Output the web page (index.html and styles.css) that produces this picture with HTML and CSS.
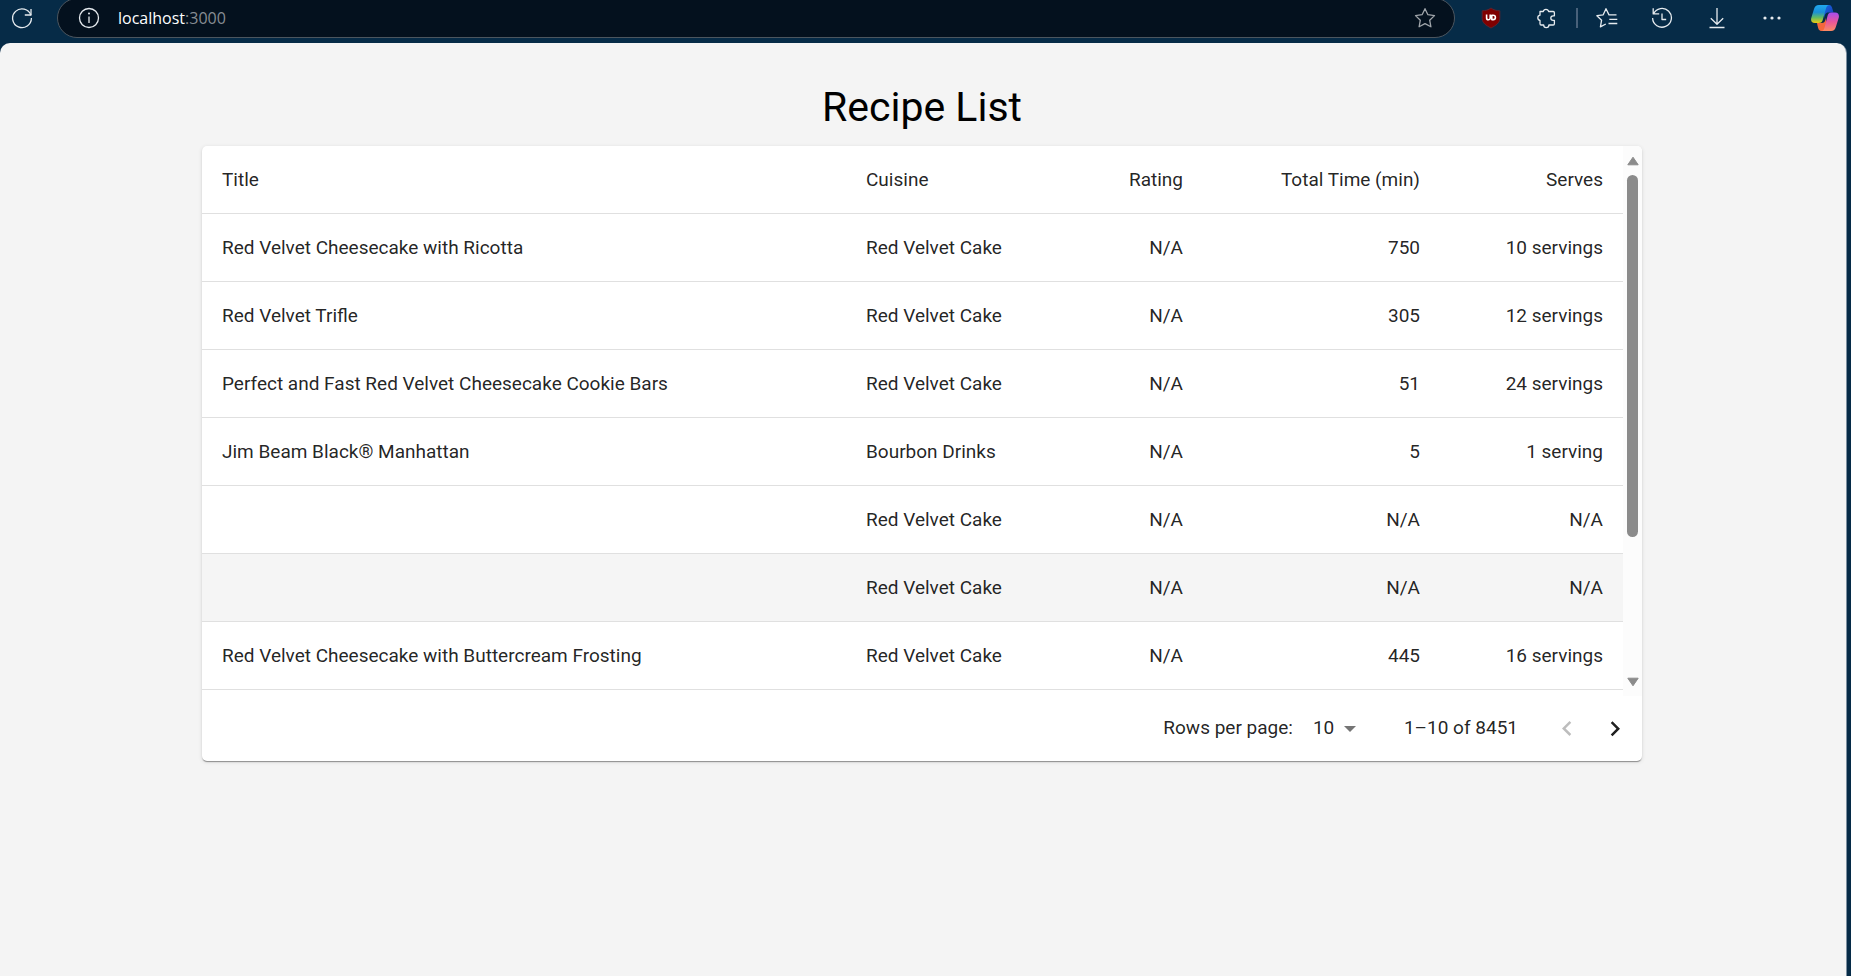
FILE: index.html
```html
<!DOCTYPE html>
<html lang="en">
<head>
<meta charset="utf-8">
<title>Recipe List</title>
<link rel="stylesheet" href="styles.css">
</head>
<body>
<header class="toolbar">
  <button class="tool refresh" aria-label="Refresh"><svg viewBox="0 0 22 22"><path d="M19.9 8.2A9.4 9.4 0 1 0 20.4 11"/><path d="M20 2v6h-6.200"/></svg></button>
  <div class="address">
    <button class="tool" aria-label="Site information"><svg viewBox="0 0 22 22"><circle cx="11" cy="11" r="9.500"/><path d="M11 9.500v6.500"/><circle class="solid" cx="11" cy="6.500" r="1"/></svg></button>
    <div class="url"><span class="host">localhost</span><span>:3000</span></div>
    <button class="tool dim" aria-label="Add to favorites"><svg viewBox="0 0 22 22"><path d="M11 1.700l2.900 6 6.600.9-4.800 4.600 1.200 6.600L11 16.600l-5.900 3.200 1.200-6.600L1.500 8.600l6.600-.9z"/></svg></button>
  </div>
  <div class="actions">
    <button class="tool" aria-label="uBlock Origin"><svg viewBox="0 0 22 22"><path class="shield" d="M11 1c2.500 1.900 5.400 2.700 8.800 2.800v8c0 4-3.800 6.700-8.800 9.200-5-2.500-8.800-5.200-8.800-9.200v-8C5.600 3.700 8.500 2.900 11 1z"/><path class="mark" d="M6.600 7.600v3.400a1.800 1.800 0 0 0 3.600 0V7.600M11.800 8.200v4.400h1.400a2.200 2.200 0 0 0 0-4.400z"/></svg></button>
    <button class="tool" aria-label="Extensions"><svg viewBox="0 0 22 22"><path d="M5 4.500h3.300a2.700 2.700 0 0 1 5.300 0h4.600c.8 0 1.200.4 1.200 1.200v3.100h-1.300a2.300 2.300 0 0 0 0 4.600h1.300v3.400c0 .8-.4 1.200-1.200 1.200h-4.300a2.600 2.600 0 0 1-5.200 0H6.200c-.8 0-1.200-.4-1.200-1.200v-3.300a2.700 2.700 0 0 1 0-5.300z"/></svg></button>
    <span class="divider"></span>
    <button class="tool" aria-label="Favorites"><svg viewBox="0 0 22 22"><path d="M20.500 7.900H13L10 1.700 7.200 7.800l-6.300.9 4.700 4.500-1.200 6.600L9.800 17M13.300 12.300h8M12.500 16.500h8.800"/></svg></button>
    <button class="tool" aria-label="History"><svg viewBox="0 0 22 22"><path d="M2.400 7A9.400 9.400 0 1 1 1.600 11M2.200 1.200v5.700h6M11 6.500v6h4.200"/></svg></button>
    <button class="tool" aria-label="Downloads"><svg viewBox="0 0 22 22"><path d="M11 1v16M4.800 11.200L11 17.200l6.200-6M3.500 20.500h15"/></svg></button>
    <button class="tool" aria-label="More"><svg viewBox="0 0 22 22"><g class="solid"><circle cx="4" cy="11" r="1.600"/><circle cx="11" cy="11" r="1.600"/><circle cx="18" cy="11" r="1.600"/></g></svg></button>
    <button class="tool copilot" aria-label="Copilot"><svg viewBox="0 0 28 28">
      <defs>
        <linearGradient id="cool" x1="0" y1="0" x2="0" y2="1"><stop offset="0" stop-color="#20a8ee"/><stop offset=".4" stop-color="#1a8fd8"/><stop offset=".7" stop-color="#62bb62"/><stop offset="1" stop-color="#f0cc10"/></linearGradient>
        <linearGradient id="warm" x1="0" y1="0" x2="0" y2="1"><stop offset="0" stop-color="#a54df0"/><stop offset=".5" stop-color="#e8559c"/><stop offset="1" stop-color="#fb8a62"/></linearGradient>
        <linearGradient id="deep" x1="0" y1="0" x2="1" y2="1"><stop offset="0" stop-color="#1769e0"/><stop offset="1" stop-color="#1838b8"/></linearGradient>
      </defs>
      <path fill="url(#deep)" d="M13 1h4.500c3 0 3.500 2 4.300 5l.7 2.500h-5C14 8.500 14 11 13 14z"/>
      <path fill="#f4673c" d="M15 27h-4c-3.500 0-3.700-2.500-4.500-5.500L6 19h5c3 0 3.200-3 4-5z"/>
      <path fill="url(#cool)" d="M8 1h10c-2 .5-2.700 2-3.300 4.500L12 15c-.8 3-1.700 4-4.500 4H4c-3.700 0-4.500-2.500-3.600-5.500L3 5c.9-2.700 2.200-4 5-4z"/>
      <path fill="url(#warm)" d="M20.500 8.500H24c3.700 0 4.500 2.800 3.600 5.800L25 22.500c-.9 3-2.200 4.500-5 4.500H10.500c2 0 2.700-2 3.300-4.200l2.500-10c.8-3 1.600-4.300 4.200-4.300z"/>
    </svg></button>
  </div>
</header>
<main class="page">
  <div class="container">
    <h1>Recipe List</h1>
    <section class="card">
      <div class="scroller">
        <table>
          <colgroup><col><col class="c-cuisine"><col class="c-rating"><col class="c-time"><col class="c-serves"></colgroup>
          <thead><tr><th scope="col">Title</th><th scope="col">Cuisine</th><th scope="col" class="num">Rating</th><th scope="col" class="num">Total Time (min)</th><th scope="col" class="num">Serves</th></tr></thead>
          <tbody>
            <tr><td>Red Velvet Cheesecake with Ricotta</td><td>Red Velvet Cake</td><td class="num">N/A</td><td class="num">750</td><td class="num">10 servings</td></tr>
            <tr><td>Red Velvet Trifle</td><td>Red Velvet Cake</td><td class="num">N/A</td><td class="num">305</td><td class="num">12 servings</td></tr>
            <tr><td>Perfect and Fast Red Velvet Cheesecake Cookie Bars</td><td>Red Velvet Cake</td><td class="num">N/A</td><td class="num">51</td><td class="num">24 servings</td></tr>
            <tr><td>Jim Beam Black® Manhattan</td><td>Bourbon Drinks</td><td class="num">N/A</td><td class="num">5</td><td class="num">1 serving</td></tr>
            <tr><td></td><td>Red Velvet Cake</td><td class="num">N/A</td><td class="num">N/A</td><td class="num">N/A</td></tr>
            <tr class="hovered"><td></td><td>Red Velvet Cake</td><td class="num">N/A</td><td class="num">N/A</td><td class="num">N/A</td></tr>
            <tr><td>Red Velvet Cheesecake with Buttercream Frosting</td><td>Red Velvet Cake</td><td class="num">N/A</td><td class="num">445</td><td class="num">16 servings</td></tr>
          </tbody>
        </table>
        <div class="scrollbar" aria-hidden="true">
          <svg viewBox="0 0 12 10"><path d="M6 1.200L11.200 8.800H.8z"/></svg>
          <div class="track"><div class="thumb"></div></div>
          <svg viewBox="0 0 12 10"><path d="M6 8.800L.8 1.200h10.400z"/></svg>
        </div>
      </div>
      <footer class="pagination">
        <label for="rows">Rows per page:</label>
        <span class="select"><select id="rows"><option>10</option></select><svg viewBox="0 0 30 30" aria-hidden="true"><path d="M9 13l6 6 6-6z"/></svg></span>
        <span class="range">1–10 of 8451</span>
        <button class="pager" aria-label="Previous page" disabled><svg viewBox="0 0 24 24"><path d="M15.410 16.090l-4.580-4.590 4.580-4.590L14 5.500l-6 6 6 6z"/></svg></button>
        <button class="pager" aria-label="Next page"><svg viewBox="0 0 24 24"><path d="M8.590 16.340l4.580-4.590-4.580-4.590L10 5.750l6 6-6 6z"/></svg></button>
      </footer>
    </section>
  </div>
</main>
</body>
</html>
```
FILE: styles.css
```css
* { box-sizing: border-box; }
body {
  margin: 0;
  min-height: 100vh;
  display: flex;
  flex-direction: column;
  background: #062b47;
  color: rgba(0, 0, 0, 0.87);
  font-family: Roboto, sans-serif;
  font-size: 19px;
  line-height: 27px;
}
button { padding: 0; border: 0; background: none; color: inherit; }
svg { display: block; }

.toolbar {
  display: flex;
  align-items: center;
  height: 43px;
  padding: 0 12px 7px 11px;
  overflow: hidden;
  color: #e6ebef;
}
.tool { width: 22px; height: 22px; flex: none; }
.tool svg { width: 100%; fill: none; stroke: currentColor; stroke-width: 1.3; stroke-linejoin: round; }
.tool .solid { fill: currentColor; stroke: none; }
.tool .shield { fill: #800000; stroke: #5a2430; stroke-width: 1; }
.tool .mark { stroke: #fff; stroke-width: 1.6; }
.dim { color: #a0a5aa; }
.address {
  flex: 1;
  display: flex;
  align-items: center;
  height: 40px;
  margin: 0 25px 0 24px;
  padding: 0 18px 0 20px;
  border: 1px solid #4c565f;
  border-radius: 20px;
  background: #04111e;
}
.url {
  flex: 1;
  padding-left: 18px;
  font-family: "Open Sans", "Noto Sans", sans-serif;
  font-size: 16px;
  line-height: 22px;
  color: #878d93;
}
.host { color: #fff; }
.actions { display: flex; align-items: center; gap: 33px; }
.divider { width: 2px; height: 20px; margin: 0 -15px 0 -14px; background: #48617a; }
.copilot { width: 28px; height: 28px; margin-left: -5px; }
.copilot svg { stroke: none; }

.page {
  flex: 1;
  margin-right: 4px;
  padding: 39px 26px 40px 24px;
  border-right: 1px solid #7c8fa0;
  border-radius: 10px 10px 0 0;
  background: #f4f4f4;
}
.container { max-width: 1440px; margin: 0 auto; }
h1 {
  margin: 0 0 13px;
  color: #000;
  font-size: 41px;
  font-weight: 400;
  line-height: 51px;
  text-align: center;
}
.card {
  overflow: hidden;
  border-radius: 5px;
  background: #fff;
  box-shadow: 0 2px 1px -1px rgba(0, 0, 0, 0.25), 0 1px 1px rgba(0, 0, 0, 0.16), 0 1px 4px rgba(0, 0, 0, 0.12);
}
.scroller { display: flex; }
table {
  flex: 1;
  align-self: flex-start;
  table-layout: fixed;
  border-spacing: 0;
  margin-bottom: 6px;
}
th, td {
  height: 68px;
  padding: 20px;
  border-bottom: 1px solid #e0e0e0;
  font-weight: 400;
  text-align: left;
  white-space: nowrap;
}
.num { text-align: right; }
.c-cuisine { width: 177px; }
.c-rating { width: 180px; }
.c-time { width: 237px; }
.c-serves { width: 183px; }
.hovered { background: #f5f5f5; }

.scrollbar {
  display: flex;
  flex-direction: column;
  align-items: center;
  gap: 9px;
  width: 19px;
  padding: 10px 0 9px;
  background: #fcfcfc;
}
.scrollbar svg { width: 12px; height: 10px; fill: #8b8b8b; stroke: #8b8b8b; stroke-linejoin: round; }
.track { flex: 1; }
.thumb { width: 11px; height: 72%; min-height: 362px; border-radius: 6px; background: #8b8b8b; }

.pagination {
  display: flex;
  align-items: center;
  justify-content: flex-end;
  height: 65px;
  padding: 0 3px 2px 0;
}
.select { display: grid; align-items: center; margin: 0 39px 0 10px; }
.select > * { grid-area: 1 / 1; }
.select select {
  appearance: none;
  width: 62px;
  padding: 0 30px 0 10px;
  border: 0;
  background: none;
  color: inherit;
  font: inherit;
}
.select svg { justify-self: end; width: 30px; height: 30px; fill: #757575; pointer-events: none; }
.range { margin-right: 25px; }
.pager { display: grid; place-items: center; width: 48px; height: 50px; color: #212121; }
.pager svg { width: 30px; height: 30px; margin-top: 2px; fill: currentColor; }
.pager:disabled { color: #bdbdbd; }
```
